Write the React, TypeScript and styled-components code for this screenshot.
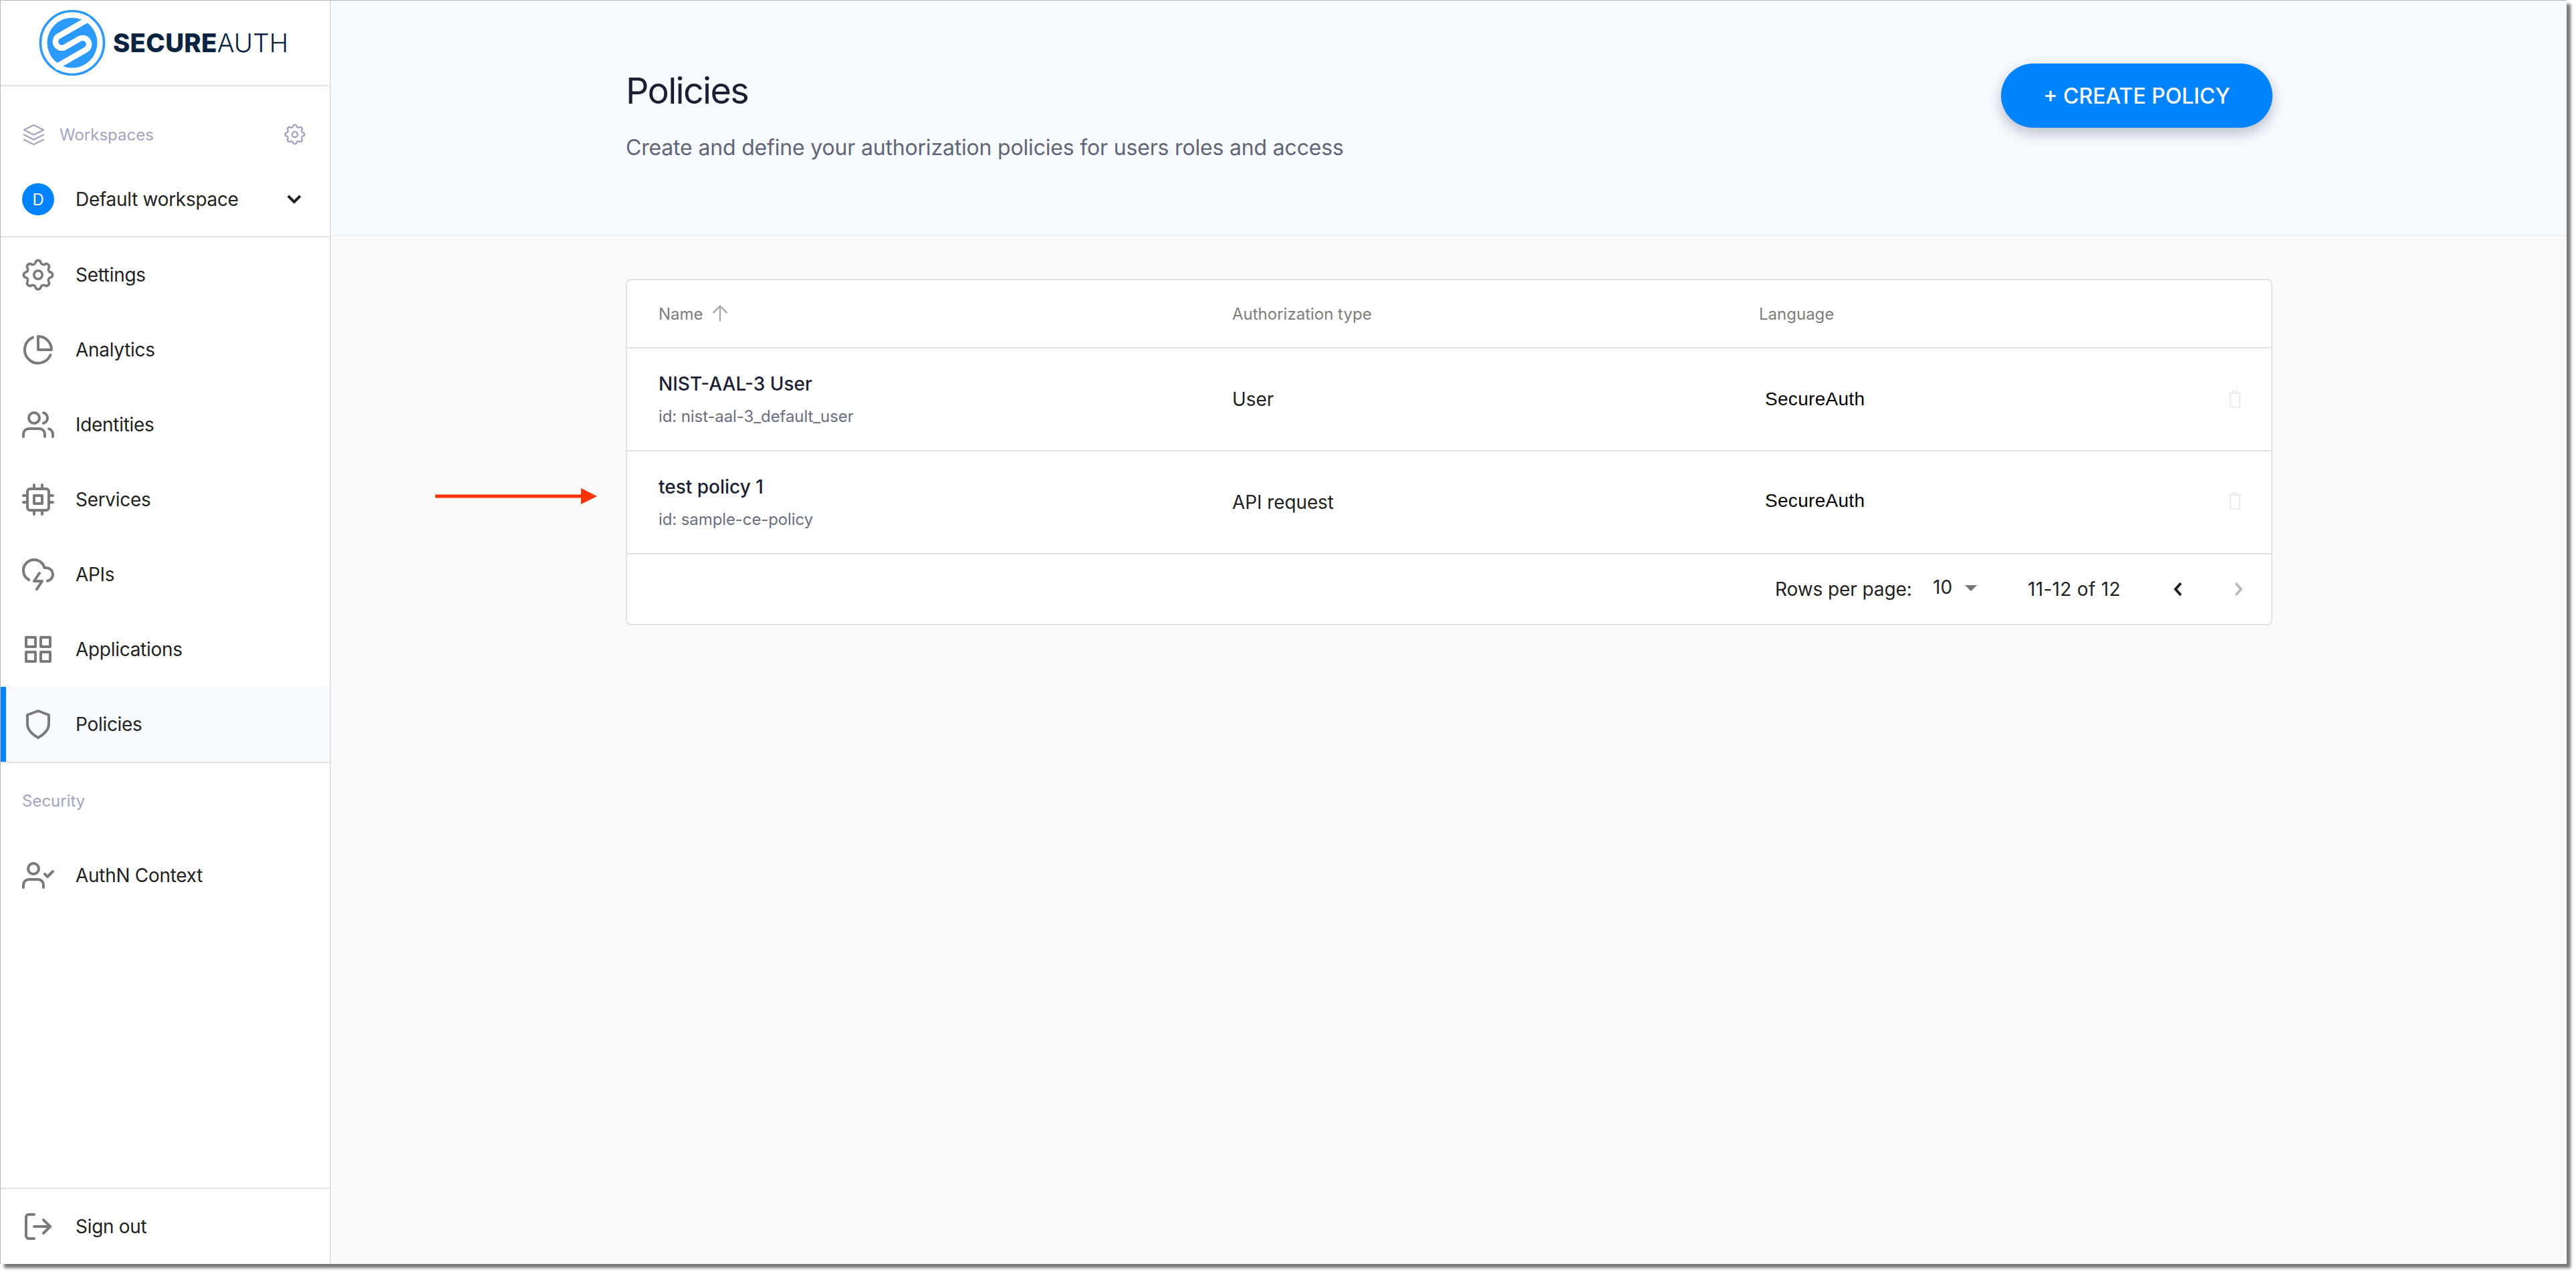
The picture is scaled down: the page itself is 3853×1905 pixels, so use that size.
import React from "react";
import styled, { createGlobalStyle } from "styled-components";
import { FiPieChart, FiUsers, FiCpu, FiGrid, FiShield, FiUserCheck, FiLogOut, FiLayers } from "react-icons/fi";

const Global = createGlobalStyle`
  html, body { margin: 0; padding: 0; background: #fff; }
  body { font-family: Inter, "Noto Sans", sans-serif; min-height: 1905px; }
  * { box-sizing: border-box; }
`;

const Frame = styled.div`
  width: 3839px;
  height: 1890px;
  display: flex;
  background: #fafafa;
  border-left: 1px solid #b9b9b9;
  border-top: 1px solid #b9b9b9;
  box-shadow: 6px 6px 4px #777;
  overflow: hidden;
`;

const Sidebar = styled.aside`
  width: 494px;
  flex: none;
  display: flex;
  flex-direction: column;
  background: #fff;
  border-right: 2px solid #e2e2e2;
`;

const LogoBar = styled.div`
  height: 128px;
  flex: none;
  display: flex;
  align-items: center;
  padding: 0 0 0 57px;
  border-bottom: 2px solid #e2e2e2;
`;

const LogoName = styled.div`
  margin-left: 11px;
  display: flex;
  font-size: 38.5px;
  line-height: 1;
  color: #0b2540;
`;

const LogoBold = styled.span`
  font-weight: 800;
  letter-spacing: 0.2px;
`;

const LogoLight = styled.span`
  font-weight: 300;
`;

const WorkspaceBlock = styled.div`
  height: 226px;
  flex: none;
  border-bottom: 2px solid #e2e2e2;
  display: flex;
  flex-direction: column;
  padding: 0 36px 0 32px;
`;

const WorkspaceHead = styled.div`
  height: 32px;
  margin-top: 56px;
  display: flex;
  align-items: center;
  color: #a3a5bd;
  font-size: 24px;
`;

const LayersIcon = styled(FiLayers)`
  width: 35px;
  height: 35px;
  flex: none;
  margin-right: 21px;
  stroke-width: 1.5;
`;

const HeadGear = styled.svg`
  width: 32px;
  height: 32px;
  margin-left: auto;
  fill: none;
  stroke: #a3a5bd;
  stroke-width: 1.5;
`;

const WorkspaceRow = styled.div`
  margin-top: 57px;
  display: flex;
  align-items: center;
  font-size: 28px;
  letter-spacing: -0.3px;
  color: #222;
`;

const Avatar = styled.div`
  width: 48px;
  height: 48px;
  flex: none;
  border-radius: 50%;
  background: #0083ff;
  color: #fff;
  display: flex;
  align-items: center;
  justify-content: center;
  font-size: 24px;
  margin-right: 32px;
`;

const ChevronDown = styled.svg`
  width: 24px;
  height: 16px;
  margin-left: auto;
  margin-right: 5px;
  fill: none;
  stroke: #222;
  stroke-width: 4;
`;

const NavRow = styled.div<{ $active?: boolean }>`
  height: 112px;
  flex: none;
  display: flex;
  align-items: center;
  padding-left: ${(p) => (p.$active ? "24px" : "32px")};
  font-size: 28px;
  letter-spacing: -0.3px;
  color: #222;
  background: ${(p) => (p.$active ? "#f7faff" : "transparent")};
  border-left: ${(p) => (p.$active ? "8px solid #0083ff" : "none")};
`;

const IconSlot = styled.span`
  width: 48px;
  height: 48px;
  flex: none;
  margin-right: 32px;
  color: #7a7a7a;
  display: flex;
  & > svg {
    width: 48px;
    height: 48px;
    stroke-width: 2;
  }
`;

const Divider = styled.div`
  height: 2px;
  flex: none;
  background: #e2e2e2;
`;

const SectionLabel = styled.div`
  height: 112px;
  flex: none;
  padding: 0 32px;
  display: flex;
  align-items: center;
  font-size: 24px;
  color: #a3a5bd;
`;

const Footer = styled.div`
  margin-top: auto;
  border-top: 2px solid #e2e2e2;
`;

const Main = styled.main`
  flex: 1;
  min-width: 0;
  display: flex;
  flex-direction: column;
`;

const Header = styled.header`
  height: 352px;
  flex: none;
  background: #f7faff;
  border-bottom: 2px solid #eeeeee;
  padding: 94px 440px 0 441px;
  display: flex;
  justify-content: space-between;
  align-items: flex-start;
`;

const Title = styled.h1`
  margin: 13px 0 0;
  font-size: 54px;
  line-height: 56px;
  letter-spacing: -1.7px;
  font-weight: 400;
  color: #1c1e33;
`;

const Subtitle = styled.p`
  margin: 37px 0 0;
  font-size: 32px;
  line-height: 40px;
  letter-spacing: -0.18px;
  font-weight: 400;
  color: #626576;
`;

const CreateButton = styled.button`
  width: 406px;
  height: 96px;
  border: none;
  border-radius: 48px;
  background: #0083ff;
  color: #fff;
  font-family: inherit;
  font-size: 32px;
  font-weight: 500;
  box-shadow: 0 8px 20px rgba(40, 50, 70, 0.3);
`;

const Content = styled.div`
  padding: 64px 440px 0 441px;
`;

const Card = styled.section`
  background: #fff;
  border: 2px solid #e2e2e2;
  border-radius: 8px;
`;

const GridRow = styled.div<{ $h: number }>`
  height: ${(p) => p.$h}px;
  display: grid;
  grid-template-columns: 858px 788px 1fr;
  align-items: center;
  padding: 0 43px 0 47px;
  border-bottom: 2px solid #e2e2e2;
`;

const HeadCell = styled.div`
  font-size: 24px;
  color: #7d7d7d;
  display: flex;
  align-items: center;
`;

const SortArrow = styled.svg`
  width: 26px;
  height: 26px;
  margin-left: 12px;
  fill: none;
  stroke: #a9a9a9;
  stroke-width: 1.5;
`;

const NameCell = styled.div`
  display: flex;
  flex-direction: column;
  gap: 17px;
  margin-top: 2px;
`;

const PolicyName = styled.div`
  font-size: 28px;
  line-height: 32px;
  font-weight: 500;
  color: #1c1e33;
`;

const PolicyId = styled.div`
  font-size: 24px;
  line-height: 32px;
  letter-spacing: -0.1px;
  color: #6b6d80;
`;

const BodyText = styled.div`
  font-size: 28px;
  letter-spacing: -0.1px;
  color: #222;
`;

const LangCell = styled.div<{ $shift: number }>`
  display: flex;
  align-items: center;
  justify-content: space-between;
  padding-left: 9px;
  font-family: "Liberation Sans", Arial, sans-serif;
  font-size: 28px;
  letter-spacing: 0.3px;
  color: #000;
  margin-top: ${(p) => p.$shift}px;
`;

const Trash = styled.svg`
  width: 22px;
  height: 28px;
  fill: none;
  stroke: #ececec;
  stroke-width: 2;
`;

const Pager = styled.div`
  height: 104px;
  display: flex;
  align-items: center;
  padding-left: 1717px;
  font-size: 28px;
  color: #222;
  & > * {
    flex: none;
  }
`;

const PerPage = styled.span`
  width: 236px;
  letter-spacing: -0.1px;
`;

const PerPageValue = styled.span`
  width: 48px;
  margin-top: -6px;
`;

const Caret = styled.span`
  width: 0;
  height: 0;
  margin-top: -4px;
  border-left: 9px solid transparent;
  border-right: 9px solid transparent;
  border-top: 9px solid #757575;
`;

const Range = styled.span`
  margin-left: 76px;
  width: 218px;
  letter-spacing: 0.3px;
`;

const PageChevron = styled.svg<{ $off?: boolean }>`
  width: 14px;
  height: 22px;
  fill: none;
  stroke: ${(p) => (p.$off ? "#bdbdbd" : "#222")};
  stroke-width: 4;
  margin-right: 76px;
`;

const Marker = styled.svg`
  position: absolute;
  left: 651px;
  top: 730px;
  width: 243px;
  height: 24px;
`;

const gearPath =
  "M10.325 4.317c.426 -1.756 2.924 -1.756 3.35 0a1.724 1.724 0 0 0 2.573 1.066c1.543 -.94 3.31 .826 2.37 2.37a1.724 1.724 0 0 0 1.065 2.572c1.756 .426 1.756 2.924 0 3.35a1.724 1.724 0 0 0 -1.066 2.573c.94 1.543 -.826 3.31 -2.37 2.37a1.724 1.724 0 0 0 -2.572 1.065c-.426 1.756 -2.924 1.756 -3.35 0a1.724 1.724 0 0 0 -2.573 -1.066c-1.543 .94 -3.31 -.826 -2.37 -2.37a1.724 1.724 0 0 0 -1.065 -2.572c-1.756 -.426 -1.756 -2.924 0 -3.35a1.724 1.724 0 0 0 1.066 -2.573c-.94 -1.543 .826 -3.31 2.37 -2.37c1 .608 2.296 .07 2.572 -1.065z";

const GearGlyph = () => (
  <>
    <path d={gearPath} />
    <circle cx="12" cy="12" r="2.6" />
  </>
);

const Gear = () => (
  <svg viewBox="2 2 20 20" fill="none" stroke="currentColor" style={{ strokeWidth: 1.5 }}>
    <GearGlyph />
  </svg>
);

const CloudBolt = () => (
  <svg viewBox="0 0 24 24" fill="none" stroke="currentColor" strokeLinecap="round" strokeLinejoin="round">
    <path d="M19 16.9A5 5 0 0 0 18 7h-1.26a8 8 0 1 0-11.62 9" />
    <polyline points="13 11 9 17 15 17 11 23" />
  </svg>
);

const LogoMark = () => (
  <svg width="100" height="100" viewBox="0 0 100 100" fill="none" style={{ flex: "none" }}>
    <circle cx="50" cy="50" r="47.5" stroke="#2c99ff" strokeWidth="3.6" />
    <circle cx="50" cy="50" r="37.5" fill="#2c99ff" />
    <path
      d="M76 13.5 L29.7 40 A9.5 9.5 0 0 0 39.2 56.5 L60.9 44 A9.5 9.5 0 0 1 70.4 60.5 L24 87"
      stroke="#fff"
      strokeWidth="8.5"
    />
  </svg>
);

const TrashIcon = () => (
  <Trash viewBox="0 0 22 28">
    <path d="M2 5h18M8 5V1.5h6V5M4 5v21h14V5" />
  </Trash>
);

const nav: [string, React.ReactNode][] = [
  ["Settings", <Gear />],
  ["Analytics", <FiPieChart />],
  ["Identities", <FiUsers />],
  ["Services", <FiCpu />],
  ["APIs", <CloudBolt />],
  ["Applications", <FiGrid />],
];

const rows = [
  { name: "NIST-AAL-3 User", id: "id: nist-aal-3_default_user", type: "User", shift: 0 },
  { name: "test policy 1", id: "id: sample-ce-policy", type: "API request", shift: -4 },
];

export default function App() {
  return (
    <>
      <Global />
      <Frame>
        <Sidebar>
          <LogoBar>
            <LogoMark />
            <LogoName>
              <LogoBold>SECURE</LogoBold>
              <LogoLight>AUTH</LogoLight>
            </LogoName>
          </LogoBar>
          <WorkspaceBlock>
            <WorkspaceHead>
              <LayersIcon />
              Workspaces
              <HeadGear viewBox="2 2 20 20">
                <GearGlyph />
              </HeadGear>
            </WorkspaceHead>
            <WorkspaceRow>
              <Avatar>D</Avatar>
              Default workspace
              <ChevronDown viewBox="0 0 24 16">
                <polyline points="3,3 12,12 21,3" />
              </ChevronDown>
            </WorkspaceRow>
          </WorkspaceBlock>
          {nav.map(([label, icon]) => (
            <NavRow key={label}>
              <IconSlot>{icon}</IconSlot>
              {label}
            </NavRow>
          ))}
          <NavRow $active>
            <IconSlot>
              <FiShield />
            </IconSlot>
            Policies
          </NavRow>
          <Divider />
          <SectionLabel>Security</SectionLabel>
          <NavRow>
            <IconSlot>
              <FiUserCheck />
            </IconSlot>
            AuthN Context
          </NavRow>
          <Footer>
            <NavRow>
              <IconSlot>
                <FiLogOut />
              </IconSlot>
              Sign out
            </NavRow>
          </Footer>
        </Sidebar>
        <Main>
          <Header>
            <div>
              <Title>Policies</Title>
              <Subtitle>Create and define your authorization policies for users roles and access</Subtitle>
            </div>
            <CreateButton>+ CREATE POLICY</CreateButton>
          </Header>
          <Content>
            <Card>
              <GridRow $h={102}>
                <HeadCell>
                  Name
                  <SortArrow viewBox="4 4 16 16">
                    <path d="M12 19V5M5.5 11.5L12 5l6.5 6.5" />
                  </SortArrow>
                </HeadCell>
                <HeadCell>Authorization type</HeadCell>
                <HeadCell>Language</HeadCell>
              </GridRow>
              {rows.map((r) => (
                <GridRow $h={154} key={r.id}>
                  <NameCell>
                    <PolicyName>{r.name}</PolicyName>
                    <PolicyId>{r.id}</PolicyId>
                  </NameCell>
                  <BodyText>{r.type}</BodyText>
                  <LangCell $shift={r.shift}>
                    SecureAuth
                    <TrashIcon />
                  </LangCell>
                </GridRow>
              ))}
              <Pager>
                <PerPage>Rows per page:</PerPage>
                <PerPageValue>10</PerPageValue>
                <Caret />
                <Range>11-12 of 12</Range>
                <PageChevron viewBox="0 0 14 22">
                  <polyline points="11,2 3,11 11,20" />
                </PageChevron>
                <PageChevron viewBox="0 0 14 22" $off>
                  <polyline points="3,2 11,11 3,20" />
                </PageChevron>
              </Pager>
            </Card>
          </Content>
        </Main>
      </Frame>
      <Marker viewBox="0 0 243 24">
        <rect x="0" y="9.5" width="220" height="5" fill="#ff3300" />
        <polygon points="218,0 242,12 218,24" fill="#ff3300" />
      </Marker>
    </>
  );
}
